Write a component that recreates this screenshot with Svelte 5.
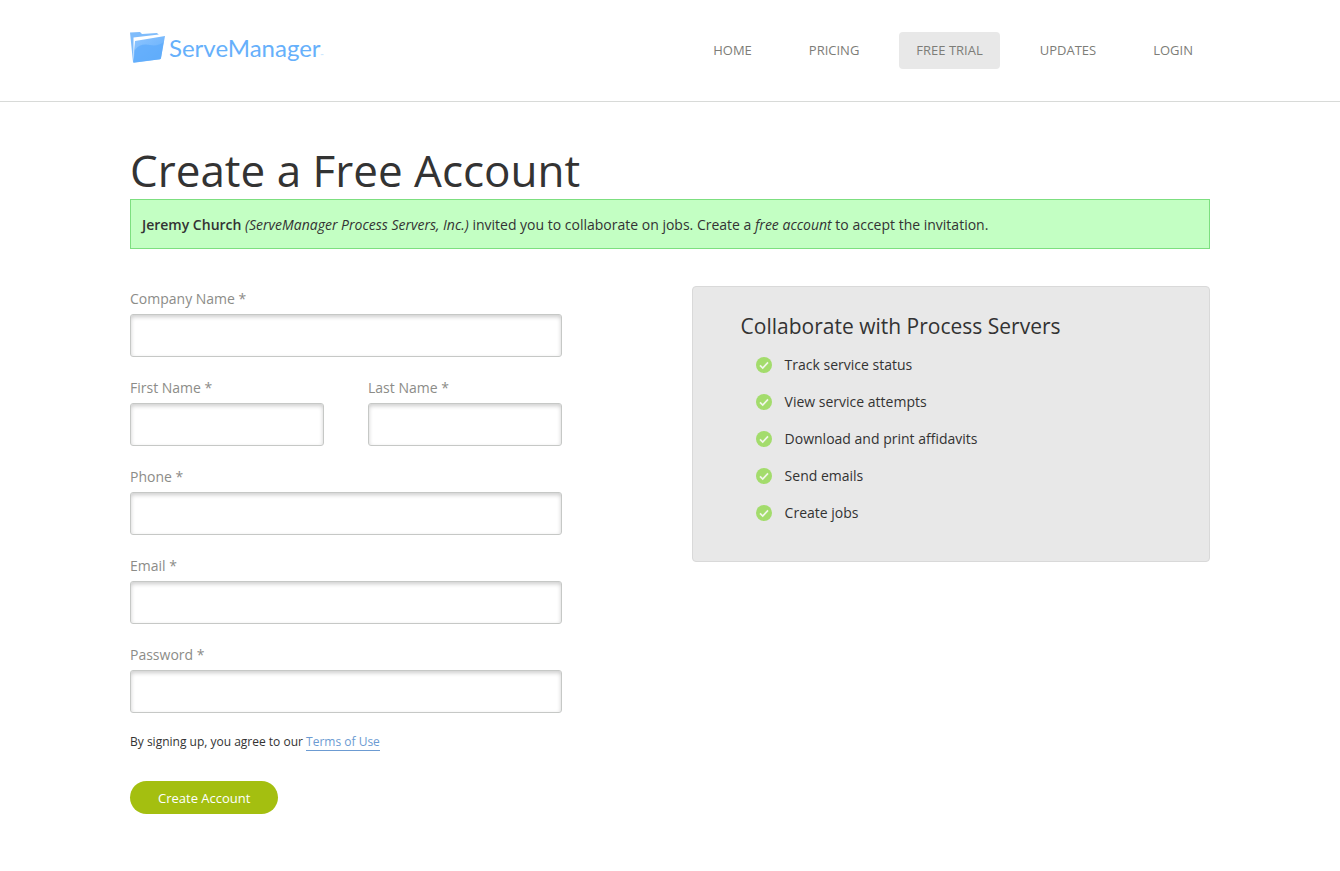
<script>
	const links = ['Home', 'Pricing', 'Free Trial', 'Updates', 'Login'];
	const current = 'Free Trial';

	const features = [
		'Track service status',
		'View service attempts',
		'Download and print affidavits',
		'Send emails',
		'Create jobs'
	];

	const fields = [
		{ id: 'company', label: 'Company Name', type: 'text' },
		{ id: 'first', label: 'First Name', type: 'text', half: true },
		{ id: 'last', label: 'Last Name', type: 'text', half: true },
		{ id: 'phone', label: 'Phone', type: 'tel' },
		{ id: 'email', label: 'Email', type: 'email' },
		{ id: 'password', label: 'Password', type: 'password' }
	];
</script>

<header>
	<div class="container bar">
		<a class="logo" href="#home">
			<svg width="36" height="32" viewBox="0 0 36 32" aria-hidden="true">
				<defs>
					<linearGradient id="front" x1="0" y1="0" x2="1" y2="1">
						<stop offset="0" stop-color="#8ec5ff" />
						<stop offset="1" stop-color="#62aefb" />
					</linearGradient>
				</defs>
				<!-- back cover, sheet of paper, front cover -->
				<path d="M0 0.5 L10 0 L12 2 L27 1 L29 3 L5 7 L3 30 Z" fill="#7fbcfb" />
				<path d="M3.5 5.5 L29 2.5 L30 5 L6.5 9 L3.5 29 Z" fill="#fff" />
				<path d="M5 9 L35 4 L31 26 Q31 27 30 27.2 L4 30.8 Q2.8 31 3 29 Z" fill="url(#front)" />
				<path d="M5 18 Q10 11 20 13 Q28 14.5 33.6 10 L31 26 Q31 27 30 27.2 L3.4 30.6 Z" fill="#5dabfb" opacity="0.75" />
			</svg>
			<span>ServeManager<small>™</small></span>
		</a>
		<nav>
			{#each links as link}
				<a href="#{link}" class:active={link === current}>{link}</a>
			{/each}
		</nav>
	</div>
</header>

<main class="container">
	<h1>Create a Free Account</h1>
	<p class="notice">
		<strong>Jeremy Church</strong> <em>(ServeManager Process Servers, Inc.)</em> invited you to
		collaborate on jobs. Create a <em>free account</em> to accept the invitation.
	</p>

	<div class="columns">
		<form>
			{#each fields as field}
				<div class="field" class:half={field.half}>
					<label for={field.id}>{field.label} *</label>
					<input id={field.id} name={field.id} type={field.type} required />
				</div>
			{/each}
			<p class="terms">By signing up, you agree to our <a href="#terms">Terms of Use</a></p>
			<button type="submit">Create Account</button>
		</form>

		<aside>
			<h2>Collaborate with Process Servers</h2>
			<ul>
				{#each features as feature}
					<li>
						<svg width="16" height="16" viewBox="0 0 16 16" aria-hidden="true">
							<circle cx="8" cy="8" r="8" fill="#a3dc6c" />
							<path d="M4 8.4 L6.7 11 L12 5.4" fill="none" stroke="#f1f6ea" stroke-width="1.7" />
						</svg>
						{feature}
					</li>
				{/each}
			</ul>
		</aside>
	</div>
</main>

<style>
	:global(body) {
		margin: 0;
		background: #fff;
		color: #333;
		font-family: 'Open Sans', sans-serif;
		font-size: 14px;
		line-height: 20px;
	}
	.container {
		box-sizing: border-box;
		width: 100%;
		max-width: 1120px;
		margin: 0 auto;
		padding: 0 20px;
	}
	header {
		border-bottom: 1px solid #d8dad8;
	}
	.bar {
		display: flex;
		justify-content: space-between;
		align-items: flex-start;
		padding-top: 32px;
		padding-bottom: 32px;
	}
	.logo {
		display: flex;
		gap: 3px;
		color: #66b0fb;
		font-family: Lato, sans-serif;
		font-size: 24px;
		line-height: 32px;
		text-decoration: none;
	}
	.logo small {
		font-size: 4px;
		line-height: 1;
		opacity: 0.6;
	}
	nav {
		display: flex;
		gap: 23px;
	}
	nav a {
		padding: 0 17px;
		border-radius: 4px;
		color: #7d7d78;
		font-size: 13px;
		line-height: 37px;
		text-decoration: none;
		text-transform: uppercase;
	}
	nav a.active {
		background: #e8e8e8;
	}
	h1 {
		margin: 40px 0 0;
		font-size: 44px;
		font-weight: 400;
		line-height: 57px;
	}
	.notice {
		margin: 0;
		padding: 15px 11px 13px;
		border: 1px solid #7ddf80;
		background: #c3ffc3;
	}
	.notice strong {
		font-weight: 600;
	}
	.columns {
		display: flex;
		justify-content: space-between;
		align-items: flex-start;
		margin-top: 37px;
	}
	form {
		display: grid;
		grid-template-columns: 1fr 1fr;
		column-gap: 44px;
		width: 40%;
	}
	.field {
		grid-column: span 2;
		margin-bottom: 18px;
	}
	.field.half {
		grid-column: span 1;
	}
	label {
		display: block;
		padding: 3px 0 5px;
		color: #8c8c88;
	}
	input {
		display: block;
		box-sizing: border-box;
		width: 100%;
		height: 43px;
		padding: 0 10px;
		border: 1px solid #c6c8c6;
		border-radius: 3px;
		background: #fff;
		box-shadow: inset 0 2px 4px rgba(0, 0, 0, 0.2);
		font: inherit;
	}
	.terms {
		grid-column: span 2;
		margin: 1px 0 29px;
		font-size: 12px;
	}
	.terms a {
		border-bottom: 1px solid #6c9bd2;
		color: #6c9bd2;
		text-decoration: none;
	}
	button {
		grid-column: span 2;
		justify-self: start;
		height: 33px;
		margin-bottom: 40px;
		padding: 0 28px;
		border: 0;
		border-radius: 17px;
		background: #a4bf10;
		color: #fff;
		font: inherit;
		font-size: 13px;
		cursor: pointer;
	}
	aside {
		box-sizing: border-box;
		width: 48%;
		padding: 24px 48px 27px;
		border: 1px solid #d9d9d9;
		border-radius: 4px;
		background: #e8e8e8;
	}
	h2 {
		margin: 0 0 8px;
		font-size: 21px;
		font-weight: 400;
		line-height: 30px;
	}
	ul {
		margin: 0;
		padding: 0 0 0 15px;
		list-style: none;
	}
	li {
		display: flex;
		gap: 13px;
		align-items: center;
		height: 31px;
		margin-bottom: 6px;
	}
</style>
